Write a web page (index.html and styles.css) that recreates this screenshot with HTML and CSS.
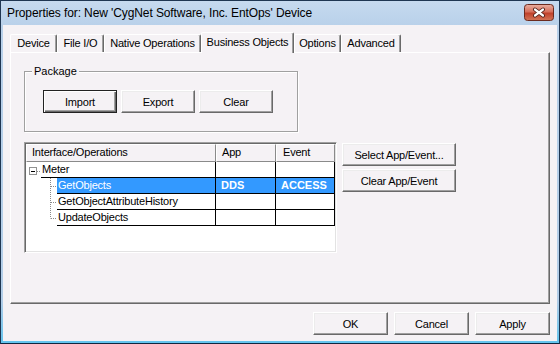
FILE: index.html
```html
<!DOCTYPE html>
<html>
<head>
    <link rel="stylesheet" href="styles.css">
</head>
<body>
    <div class="window">
        <div class="titlebar">
            <span class="title">Properties for: New 'CygNet Software, Inc. EntOps' Device</span>
            <div class="close">
                <svg width="30" height="17" viewBox="0 0 30 17">
                    <defs>
                        <linearGradient id="closeGrad" x1="0" y1="0" x2="0" y2="1">
                            <stop offset="0" stop-color="#eab0a2"/>
                            <stop offset="0.45" stop-color="#d6705c"/>
                            <stop offset="0.55" stop-color="#c0422c"/>
                            <stop offset="1" stop-color="#d37658"/>
                        </linearGradient>
                    </defs>
                    <rect x="0.5" y="0.5" width="29" height="16" rx="3" fill="url(#closeGrad)" stroke="#6b2a1e"/>
                    <path d="M11 5.5 L19 11.5 M19 5.5 L11 11.5" stroke="#4a1c14" stroke-width="4" stroke-linecap="round"/>
                    <path d="M11 5.5 L19 11.5 M19 5.5 L11 11.5" stroke="#fff" stroke-width="2.2" stroke-linecap="round"/>
                </svg>
            </div>
        </div>

        <div class="client">
            <div class="tabs">
                <div class="tab tab-device">Device</div>
                <div class="tab tab-fileio">File I/O</div>
                <div class="tab tab-native">Native Operations</div>
                <div class="tab tab-business selected">Business Objects</div>
                <div class="tab tab-options">Options</div>
                <div class="tab tab-advanced">Advanced</div>
            </div>

            <div class="panel">
                <div class="group">
                    <span class="group-label">Package</span>
                    <div class="group-buttons">
                        <button class="btn btn-default">Import</button>
                        <button class="btn">Export</button>
                        <button class="btn">Clear</button>
                    </div>
                </div>

                <div class="list-area">
                    <div class="list">
                        <div class="list-header">
                            <div class="hcell">Interface/Operations</div>
                            <div class="hcell">App</div>
                            <div class="hcell hcell-event">Event</div>
                        </div>

                        <div class="row">
                            <div class="first">
                                <svg class="indent-parent" width="15" height="16" viewBox="0 0 15 16">
                                    <rect x="3.5" y="5.5" width="7" height="7" fill="#fff" stroke="#919191"/>
                                    <path d="M5 9.5 H9" stroke="#000"/>
                                    <path d="M11 9.5 H15" stroke="#8a8a8a" stroke-dasharray="1 1"/>
                                </svg>
                                <span class="name">Meter</span>
                            </div>
                            <div class="cell"></div>
                            <div class="cell"></div>
                        </div>

                        <div class="row selected">
                            <div class="first">
                                <svg width="31" height="16" viewBox="0 0 31 16">
                                    <path d="M24.5 0 V16 M25 8.5 H31" stroke="#8a8a8a" stroke-dasharray="1 1"/>
                                </svg>
                                <span class="name">GetObjects</span>
                            </div>
                            <div class="cell">DDS</div>
                            <div class="cell">ACCESS</div>
                        </div>

                        <div class="row">
                            <div class="first">
                                <svg width="31" height="16" viewBox="0 0 31 16">
                                    <path d="M24.5 0 V16 M25 8.5 H31" stroke="#8a8a8a" stroke-dasharray="1 1"/>
                                </svg>
                                <span class="name">GetObjectAttributeHistory</span>
                            </div>
                            <div class="cell"></div>
                            <div class="cell"></div>
                        </div>

                        <div class="row">
                            <div class="first">
                                <svg width="31" height="16" viewBox="0 0 31 16">
                                    <path d="M24.5 0 V8.5 M25 8.5 H31" stroke="#8a8a8a" stroke-dasharray="1 1"/>
                                </svg>
                                <span class="name">UpdateObjects</span>
                            </div>
                            <div class="cell"></div>
                            <div class="cell"></div>
                        </div>
                    </div>

                    <div class="side-buttons">
                        <button class="btn btn-wide">Select App/Event...</button>
                        <button class="btn btn-wide">Clear App/Event</button>
                    </div>
                </div>
            </div>

            <div class="footer">
                <button class="btn btn-footer">OK</button>
                <button class="btn btn-footer">Cancel</button>
                <button class="btn btn-footer">Apply</button>
            </div>
        </div>
    </div>
</body>
</html>
```

FILE: styles.css
```css
*{
    box-sizing: border-box;
}

body{
    margin: 0;
    font-family: "Liberation Sans", Arial, sans-serif;
    font-size: 11px;
    color: #000;
}

.window{
    width: 560px;
    height: 344px;
    border: 1px solid #1f3652;
    border-bottom-color: #10263e;
    background: linear-gradient(#c6daef, #b9d1ea 24px, #b2cde8 300px, #63c4ee);
    padding: 0 2px 2px;
    display: flex;
    flex-direction: column;
}

.titlebar{
    height: 24px;
    display: flex;
    justify-content: space-between;
    align-items: flex-start;
    padding: 0 3px 0 4px;
}
.title{
    font-size: 12px;
    line-height: 25px;
    letter-spacing: -0.1px;
}
.close{
    width: 30px;
    height: 17px;
    margin-top: 3px;
}
.close svg{
    display: block;
}

.client{
    flex: 1;
    background-color: #f5f2f5;
    padding: 7px 7px 0;
    display: flex;
    flex-direction: column;
}

/* tab strip */
.tabs{
    display: flex;
    align-items: flex-end;
    height: 21px;
    position: relative;
    z-index: 1;
}
.tab{
    height: 18px;
    margin-bottom: 1px;
    line-height: 16px;
    text-align: center;
    letter-spacing: -0.2px;
    background-color: #f5f2f5;
    border-top: 1px solid #fff;
    border-left: 1px solid #fff;
    border-right: 1px solid #696969;
    box-shadow: inset -1px 0 #a0a0a0;
    border-radius: 2px 2px 0 0;
}
.tab-device{ width: 47px; }
.tab-fileio{ width: 47px; }
.tab-native{ width: 97px; }
.tab-business{ width: 93px; }
.tab-options{ width: 47px; }
.tab-advanced{ width: 60px; }
.tab.selected{
    height: 21px;
    margin-bottom: 0;
    line-height: 18px;
}

.panel{
    height: 252px;
    margin-top: -1px;
    border: 1px solid;
    border-color: #fff #696969 #696969 #fff;
    box-shadow: inset -1px -1px #a0a0a0;
    padding: 18px 0 0 13px;
}

/* group box */
.group{
    position: relative;
    width: 274px;
    border: 1px solid #a0a0a0;
    box-shadow: inset 1px 1px #fff, 1px 1px #fff;
    padding: 18px 0 18px 18px;
}
.group-label{
    position: absolute;
    top: -8px;
    left: 7px;
    padding: 0 2px;
    line-height: 14px;
    background-color: #f5f2f5;
}
.group-buttons{
    display: flex;
    gap: 4px;
}

.btn{
    width: 74px;
    height: 23px;
    padding: 0;
    font-family: "Liberation Sans", Arial, sans-serif;
    font-size: 11px;
    letter-spacing: -0.2px;
    color: #000;
    background-color: #f5f2f5;
    border: 1px solid;
    border-color: #fff #696969 #696969 #fff;
    box-shadow: inset -1px -1px #a0a0a0, inset 1px 1px #ececec;
    border-radius: 0;
}
.btn-default{
    border: 1px solid #222;
    box-shadow: inset 1px 1px #fff, inset -1px -1px #696969, inset -2px -2px #a0a0a0;
}
.btn-wide{
    width: 114px;
}
.btn-footer{
    width: 75px;
}

/* list view */
.list-area{
    display: flex;
    align-items: flex-start;
    margin-top: 10px;
}
.list{
    width: 313px;
    height: 111px;
    background-color: #fff;
    border: 1px solid;
    border-color: #a0a0a0 #fff #fff #a0a0a0;
    box-shadow: inset 1px 1px #696969, inset -1px -1px #e3e3e3;
    padding: 1px;
}
.list-header{
    display: grid;
    grid-template-columns: 190px 60px 59px;
    height: 18px;
}
.hcell{
    background-color: #f5f2f5;
    border: 1px solid;
    border-color: #fff #8a8a8a #8a8a8a #fff;
    padding-left: 5px;
    line-height: 15px;
    letter-spacing: -0.2px;
}
.hcell-event{
    padding-left: 6px;
}

.row{
    display: grid;
    grid-template-columns: 190px 60px 59px;
    height: 16px;
    line-height: 15px;
    letter-spacing: -0.2px;
}
.first{
    display: flex;
}
.first svg{
    display: block;
    flex: none;
}
.name{
    flex: 1;
    padding-left: 1px;
    border-bottom: 1px solid #000;
    border-right: 1px solid #000;
    white-space: nowrap;
}
.cell{
    padding-left: 5px;
    border-bottom: 1px solid #000;
    border-right: 1px solid #000;
}
.row.selected .name,
.row.selected .cell{
    background-color: #3399ff;
    color: #fff;
}
.row.selected .cell{
    font-weight: bold;
    letter-spacing: 0;
}

.side-buttons{
    display: flex;
    flex-direction: column;
    gap: 3px;
    margin-left: 5px;
    margin-top: 1px;
}

.footer{
    display: flex;
    justify-content: flex-end;
    gap: 6px;
    margin-top: 8px;
}
```
